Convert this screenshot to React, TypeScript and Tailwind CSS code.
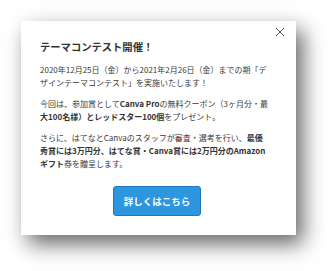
import React from "react";

const font = {
  fontFamily: '"Noto Sans CJK JP", "Noto Sans", sans-serif',
};

const CloseIcon = () => (
  <svg width="10" height="10" viewBox="0 0 10 10" className="text-[#555]">
    <path d="M1 1L9 9M9 1L1 9" stroke="currentColor" strokeWidth="1" fill="none" />
  </svg>
);

export default function App() {
  return (
    <div className="w-[329px] h-[271px] bg-white pl-[21px] pt-[21px]" style={font}>
      <div className="relative w-[275px] h-[214px] bg-white shadow-[7px_9px_20px_rgba(0,0,0,0.6)] flex flex-col pt-[18px] pl-[19px] pr-[16px]">
        <button className="absolute top-[6px] right-[11px] w-[10px] h-[10px] flex items-center justify-center">
          <CloseIcon />
        </button>

        <h2 className="text-[10.3px] leading-[16px] font-bold text-[#333]">
          テーマコンテスト開催！
        </h2>

        <div className="mt-[8px] flex flex-col gap-[8px] text-[8px] leading-[13px] text-[#3a3a3a] whitespace-nowrap">
          <p>
            2020年12月25日（金）から2021年2月26日（金）までの期「デ
            <br />
            ザインテーマコンテスト」を実施いたします！
          </p>
          <p>
            今回は、参加賞として<span className="font-semibold text-[#333]">Canva Pro</span>の無料クーポン（3ヶ月分・最
            <br />
            <span className="font-semibold text-[#333]">大100名様）とレッドスター100個</span>をプレゼント。
          </p>
          <p>
            さらに、はてなとCanvaのスタッフが審査・選考を行い、<span className="font-semibold text-[#333]">最優</span>
            <br />
            <span className="font-semibold text-[#333]">秀賞には3万円分、はてな賞・Canva賞には2万円分のAmazon</span>
            <br />
            <span className="font-semibold text-[#333]">ギフト</span>券を贈呈します。
          </p>
        </div>

        <div className="mt-[16px] flex justify-center pr-[6px]">
          <button className="w-[88px] h-[30px] rounded-[3px] bg-[#2d96de] border border-[#1e78c2] text-white text-[9.5px] font-bold">
            詳しくはこちら
          </button>
        </div>
      </div>
    </div>
  );
}
